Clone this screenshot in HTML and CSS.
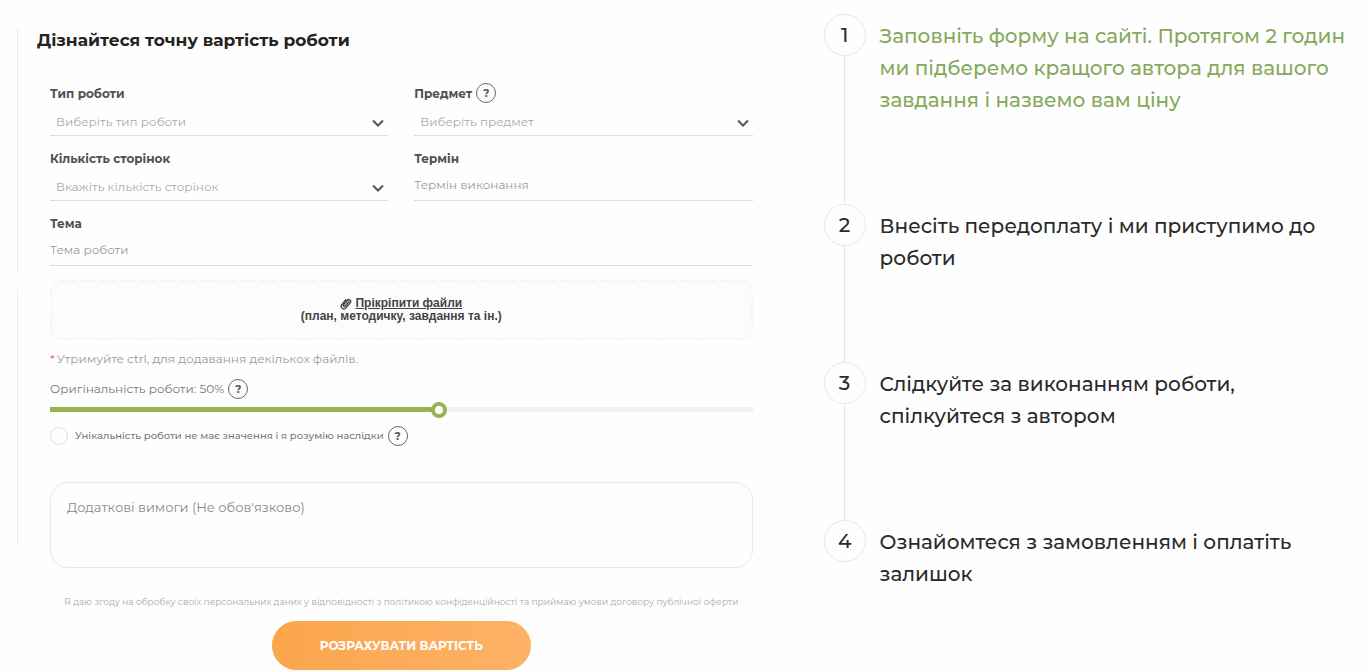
FILE: index.html
```html
<!DOCTYPE html>
<html lang="uk">
<head>
  <meta charset="UTF-8">
  <meta name="viewport" content="width=device-width, initial-scale=1">
  <title>Дізнайтеся точну вартість роботи</title>
  <link rel="stylesheet" href="styles.css">
</head>
<body>
  <main class="page">
    <!-- Форма замовлення -->
    <section class="order">
      <div class="rail">
        <div class="rail-line"></div>
        <div class="rail-line"></div>
      </div>

      <div class="order-body">
        <h1>Дізнайтеся точну вартість роботи</h1>

        <form class="form">
          <div class="fields">
            <div class="field">
              <div class="field-label"><label for="type">Тип роботи</label></div>
              <div class="select">
                <select id="type"><option>Виберіть тип роботи</option></select>
                <svg viewBox="0 0 12 8"><path d="M1 1.500l5 5 5-5"/></svg>
              </div>
            </div>
            <div class="field">
              <div class="field-label">
                <label for="subject">Предмет</label>
                <button type="button" class="help">?</button>
              </div>
              <div class="select">
                <select id="subject"><option>Виберіть предмет</option></select>
                <svg viewBox="0 0 12 8"><path d="M1 1.500l5 5 5-5"/></svg>
              </div>
            </div>
            <div class="field">
              <div class="field-label"><label for="pages">Кількість сторінок</label></div>
              <div class="select">
                <select id="pages"><option>Вкажіть кількість сторінок</option></select>
                <svg viewBox="0 0 12 8"><path d="M1 1.500l5 5 5-5"/></svg>
              </div>
            </div>
            <div class="field">
              <div class="field-label"><label for="term">Термін</label></div>
              <input type="text" id="term" placeholder="Термін виконання">
            </div>
            <div class="field wide">
              <div class="field-label"><label for="topic">Тема</label></div>
              <input type="text" id="topic" placeholder="Тема роботи">
            </div>
          </div>

          <button type="button" class="attach">
            <span class="attach-title">
              <svg viewBox="0 0 12 12"><path d="M8.800 3.600L5 8.200a1 1 0 0 1-1.500-1.300L7.300 2.300a1.800 1.800 0 0 1 2.900 2.400L5.900 9.900a2.600 2.600 0 0 1-4.100-3.300L5.800 1.700"/></svg>
              <u>Прікріпити файли</u>
            </span>
            <span>(план, методичку, завдання та ін.)</span>
          </button>
          <p class="hint"><span class="star">*</span>Утримуйте ctrl, для додавання декількох файлів.</p>

          <div class="origin">
            <label for="origin">Оригінальність роботи: 50%</label>
            <button type="button" class="help">?</button>
          </div>
          <input type="range" id="origin" class="range" min="0" max="90" value="50">

          <div class="unique">
            <input type="checkbox" id="unique">
            <label for="unique">Унікальність роботи не має значення і я розумію наслідки</label>
            <button type="button" class="help">?</button>
          </div>

          <textarea class="extra" aria-label="Додаткові вимоги" placeholder="Додаткові вимоги (Не обов'язково)"></textarea>

          <p class="terms">Я даю згоду на обробку своїх персональних даних у відповідності з політикою конфіденційності та приймаю умови договору публічної оферти</p>
          <button type="submit" class="submit">РОЗРАХУВАТИ ВАРТІСТЬ</button>
        </form>
      </div>
    </section>

    <!-- Етапи роботи -->
    <ol class="steps">
      <li class="step active">
        <div class="marker"><span class="num">1</span></div>
        <p>Заповніть форму на сайті. Протягом 2 годин ми підберемо кращого автора для вашого завдання і назвемо вам ціну</p>
      </li>
      <li class="step">
        <div class="marker"><span class="num">2</span></div>
        <p>Внесіть передоплату і ми приступимо до роботи</p>
      </li>
      <li class="step">
        <div class="marker"><span class="num">3</span></div>
        <p>Слідкуйте за виконанням роботи, спілкуйтеся з автором</p>
      </li>
      <li class="step">
        <div class="marker"><span class="num">4</span></div>
        <p>Ознайомтеся з замовленням і оплатіть залишок</p>
      </li>
    </ol>
  </main>
</body>
</html>
```
FILE: styles.css
```css
* {
  box-sizing: border-box;
}
body {
  margin: 0;
  background: #fefefe;
  color: #2a2a2a;
  font-family: Montserrat, Inter, "Noto Sans", sans-serif;
}
h1, p, ol {
  margin: 0;
  padding: 0;
}
button, input, select, textarea {
  font-family: inherit;
}
.page {
  display: grid;
  grid-template-columns: 7fr 5fr;
  gap: 71px;
  padding: 0 21px 0 17px;
}

/* Форма */
.order {
  display: flex;
}
.rail {
  display: flex;
  flex-direction: column;
  gap: 17px;
  padding: 27px 0 126px;
}
.rail-line {
  flex: 20;
  width: 1px;
  background: #ececec;
}
.rail-line:first-child {
  flex: 19;
}
.order-body {
  flex: 1;
  padding: 28px 0 2px 19px;
}
h1 {
  font-size: 17px;
  line-height: 24px;
  font-weight: 700;
  color: #222;
}
.form {
  display: flex;
  flex-direction: column;
  padding: 31px 0 0 13px;
}
.fields {
  display: grid;
  grid-template-columns: 1fr 1fr;
  gap: 12px 26px;
}
.wide {
  grid-column: 1 / -1;
}
.field-label {
  display: flex;
  align-items: center;
  gap: 4px;
  height: 20px;
  font-size: 12px;
  font-weight: 700;
  color: #505050;
}
.field input, .field select {
  display: block;
  width: 100%;
  height: 33px;
  padding: 0;
  border: none;
  border-bottom: 1px solid #ddd;
  border-radius: 0;
  background: transparent;
  font-size: 12px;
  color: #aaa;
}
.field select {
  appearance: none;
  padding: 5px 24px 0 6px;
}
::placeholder {
  color: #999;
  opacity: 1;
}
.select {
  position: relative;
}
.select svg {
  position: absolute;
  right: 4px;
  top: 16px;
  width: 12px;
  height: 8px;
  fill: none;
  stroke: #555;
  stroke-width: 2;
  pointer-events: none;
}
.help {
  width: 20px;
  height: 20px;
  padding: 0;
  border: 1px solid #666;
  border-radius: 50%;
  background: transparent;
  font-size: 11px;
  line-height: 18px;
  font-weight: 700;
  color: #555;
}
.attach {
  display: flex;
  flex-direction: column;
  align-items: center;
  justify-content: center;
  height: 60px;
  margin-top: 14px;
  border: 2px dashed #f5f5f5;
  border-radius: 10px;
  background: #fcfcfc;
  font-family: "Liberation Sans", Arial, sans-serif;
  font-size: 12px;
  line-height: 13px;
  font-weight: 700;
  color: #444;
}
.attach-title {
  display: flex;
  align-items: center;
  gap: 3px;
}
.attach svg {
  width: 12px;
  height: 12px;
  fill: none;
  stroke: #444;
  stroke-width: 1.400;
  stroke-linecap: round;
}
.hint {
  margin-top: 9px;
  font-size: 12px;
  line-height: 20px;
  color: #999;
}
.star {
  margin-right: 2px;
  color: #f55;
}
.origin {
  display: flex;
  align-items: center;
  gap: 4px;
  margin-top: 10px;
  font-size: 12px;
  line-height: 20px;
  color: #777;
}
.range {
  appearance: none;
  width: 100%;
  height: 16px;
  margin: 2px 0 0;
  background: transparent;
}
.range::-webkit-slider-runnable-track {
  height: 5px;
  background: linear-gradient(to right, #9ab352 55%, #f1f1f1 55%);
}
.range::-webkit-slider-thumb {
  appearance: none;
  width: 16px;
  height: 16px;
  margin-top: -5px;
  border: 4px solid #9ab352;
  border-radius: 50%;
  background: #fff;
}
.unique {
  display: flex;
  align-items: center;
  gap: 4px;
  margin-top: 9px;
  font-size: 10px;
  line-height: 20px;
  font-weight: 500;
  color: #777;
}
.unique input {
  appearance: none;
  width: 18px;
  height: 18px;
  margin: 0 3px 0 0;
  border: 1px solid #ddd;
  border-radius: 50%;
}
.extra {
  height: 86px;
  margin-top: 36px;
  padding: 16px;
  border: 1px solid #e8e8e8;
  border-radius: 18px;
  background: transparent;
  font-size: 13px;
  resize: none;
}
.extra::placeholder {
  color: #888;
}
.terms {
  margin-top: 26px;
  font-size: 9px;
  line-height: 16px;
  text-align: center;
  color: #aaa;
}
.submit {
  align-self: center;
  height: 49px;
  margin-top: 11px;
  padding: 0 48px;
  border: none;
  border-radius: 25px;
  background: linear-gradient(to right, #fba54c, #fdb266);
  font-size: 12px;
  font-weight: 700;
  color: #fff;
}

/* Етапи */
.steps {
  padding-top: 14px;
  list-style: none;
}
.step {
  display: flex;
  gap: 14px;
}
.marker {
  display: flex;
  flex-direction: column;
  align-items: center;
}
.marker::after {
  content: "";
  flex: 1;
  width: 1px;
  background: #e4e4e4;
}
.step:last-child .marker::after {
  display: none;
}
.num {
  width: 42px;
  height: 42px;
  border: 1px solid #e8e8e8;
  border-radius: 50%;
  font-size: 20px;
  line-height: 40px;
  font-weight: 500;
  text-align: center;
}
.step p {
  flex: 1;
  padding: 6px 0 88px;
  font-size: 20px;
  line-height: 32px;
  font-weight: 500;
}
.step:last-child p {
  padding-bottom: 0;
}
.active p {
  color: #86a95c;
}
```
